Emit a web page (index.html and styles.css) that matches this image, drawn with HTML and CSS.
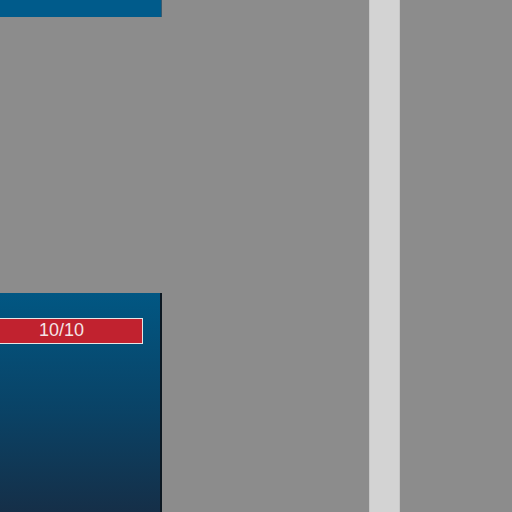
FILE: index.html
```html
<!DOCTYPE html>
<html>
<head>
<meta charset="utf-8">
<link rel="stylesheet" href="styles.css">
</head>
<body>
<div class="board">
  <div class="column">
    <div class="card card-top"></div>
    <div class="card card-main">
      <div class="hp-bar">10/10</div>
    </div>
  </div>
  <div class="track"></div>
</div>
</body>
</html>
```
FILE: styles.css
```css
html, body {
  margin: 0;
  padding: 0;
  background: #8c8c8c;
}
.board {
  display: flex;
  width: 512px;
  height: 512px;
  overflow: hidden;
}
.column {
  width: 182px;
  margin-left: -20px;
  display: flex;
  flex-direction: column;
  gap: 276px;
  flex-shrink: 0;
}
.card-top {
  height: 17px;
  background: #005b8b;
  border-right: 1px solid #3a5a6e;
}
.card-main {
  flex: 1;
  background: linear-gradient(#015783 0%, #0a4265 55%, #152f48 100%);
  border-right: 2px solid #0c1822;
  padding-top: 25px;
}
.hp-bar {
  width: 161px;
  height: 24px;
  box-sizing: content-box;
  background: #c1222f;
  border: 1px solid #e6e6e6;
  color: #f4e4e6;
  font-family: "Liberation Sans", Arial, sans-serif;
  font-size: 18px;
  line-height: 23px;
  text-align: center;
}
.track {
  width: 29px;
  margin-left: 207px;
  background: #d3d3d3;
  border-left: 1px solid #c6c6c6;
  border-right: 1px solid #c6c6c6;
  flex-shrink: 0;
}
```
